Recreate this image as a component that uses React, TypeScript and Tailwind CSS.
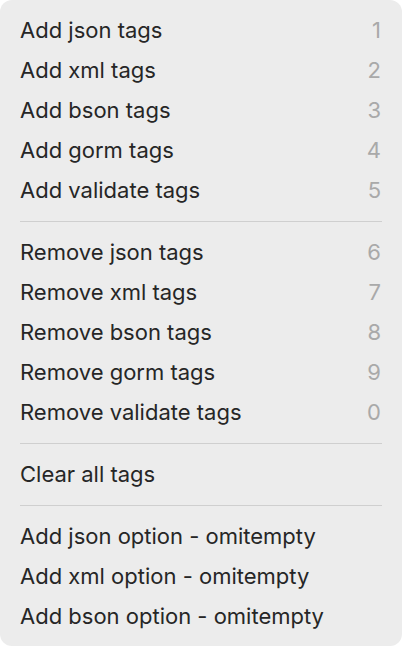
const groups: { label: string; key?: string }[][] = [
  [
    { label: "Add json tags", key: "1" },
    { label: "Add xml tags", key: "2" },
    { label: "Add bson tags", key: "3" },
    { label: "Add gorm tags", key: "4" },
    { label: "Add validate tags", key: "5" },
  ],
  [
    { label: "Remove json tags", key: "6" },
    { label: "Remove xml tags", key: "7" },
    { label: "Remove bson tags", key: "8" },
    { label: "Remove gorm tags", key: "9" },
    { label: "Remove validate tags", key: "0" },
  ],
  [{ label: "Clear all tags" }],
  [
    { label: "Add json option - omitempty" },
    { label: "Add xml option - omitempty" },
    { label: "Add bson option - omitempty" },
  ],
];

function App() {
  return (
    <div className="w-[402px] h-[646px] bg-white">
      <div
        className="h-full rounded-[12px] bg-[#ececec] py-[10px] px-[20px] text-[22px] text-[#262626]"
        style={{ fontFamily: "Inter, 'Liberation Sans', sans-serif" }}
      >
        {groups.map((group, i) => (
          <div key={i}>
            {i > 0 && <Divider />}
            {group.map((item) => (
              <div key={item.label} className="h-[40px] flex items-center justify-between">
                <span>{item.label}</span>
                {item.key && <span className="text-[#a9a9a9] pr-px">{item.key}</span>}
              </div>
            ))}
          </div>
        ))}
      </div>
    </div>
  );
}

export default App;

function Divider() {
  return (
    <div className="h-[22px] flex items-center">
      <div className="w-full h-px bg-[#cfcfcf]"></div>
    </div>
  );
}
